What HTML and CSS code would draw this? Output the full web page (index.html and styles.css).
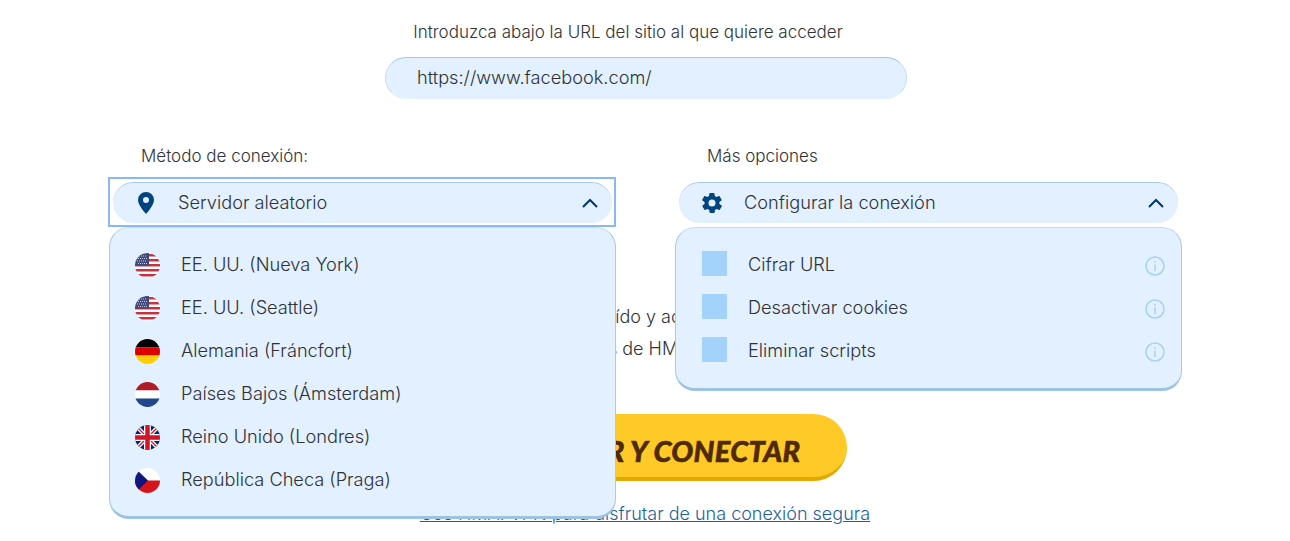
FILE: index.html
```html
<!DOCTYPE html>
<html lang="es">
<head>
  <meta charset="UTF-8">
  <title>Proxy web</title>
  <link rel="stylesheet" href="styles.css">
</head>
<body>
  <div class="page">
    <p class="url-label">Introduzca abajo la URL del sitio al que quiere acceder</p>
    <div class="url-input">https://www.facebook.com/</div>

    <div class="options">
      <div class="option-col">
        <p class="option-label">Método de conexión:</p>
        <div class="select-focus">
          <div class="select-pill">
            <svg class="select-icon" viewBox="0 0 24 24"><path fill="#00457f" fill-rule="evenodd" d="M12 1a8 8 0 0 0-8 8c0 5.5 8 14 8 14s8-8.500 8-14a8 8 0 0 0-8-8zm0 5a3 3 0 1 1 0 6 3 3 0 0 1 0-6z"/></svg>
            <span class="select-text">Servidor aleatorio</span>
            <svg class="chevron" viewBox="0 0 18 12"><path d="M2 10l7-7 7 7" fill="none" stroke="#00386b" stroke-width="2"/></svg>
          </div>
        </div>
        <ul class="menu">
          <li class="menu-item">
            <svg class="flag" viewBox="0 0 25 25"><defs><clipPath id="round"><circle cx="12.500" cy="12.500" r="12.500"/></clipPath></defs><g clip-path="url(#round)"><rect width="25" height="25" fill="#fff"/><path d="M0 1h25v2.500H0zM0 6h25v2.500H0zM0 11h25v2.500H0zM0 16h25v2.500H0zM0 21h25v2.500H0z" fill="#c8313e"/><rect width="14" height="12.500" fill="#3f4a7a"/><path d="M2 3h9M3 5.500h9M2 8h9M3 10.500h9" stroke="#c9cde0" stroke-width="1" stroke-dasharray="1 1"/></g></svg>
            <span>EE. UU. (Nueva York)</span>
          </li>
          <li class="menu-item">
            <svg class="flag" viewBox="0 0 25 25"><g clip-path="url(#round)"><rect width="25" height="25" fill="#fff"/><path d="M0 1h25v2.500H0zM0 6h25v2.500H0zM0 11h25v2.500H0zM0 16h25v2.500H0zM0 21h25v2.500H0z" fill="#c8313e"/><rect width="14" height="12.500" fill="#3f4a7a"/><path d="M2 3h9M3 5.500h9M2 8h9M3 10.500h9" stroke="#c9cde0" stroke-width="1" stroke-dasharray="1 1"/></g></svg>
            <span>EE. UU. (Seattle)</span>
          </li>
          <li class="menu-item">
            <svg class="flag" viewBox="0 0 25 25"><g clip-path="url(#round)"><rect width="25" height="8.500" fill="#000"/><rect y="8.500" width="25" height="8" fill="#dd0000"/><rect y="16.500" width="25" height="8.500" fill="#ffce00"/></g></svg>
            <span>Alemania (Fráncfort)</span>
          </li>
          <li class="menu-item">
            <svg class="flag" viewBox="0 0 25 25"><g clip-path="url(#round)"><rect width="25" height="8.500" fill="#ae1c28"/><rect y="8.500" width="25" height="8" fill="#fff"/><rect y="16.500" width="25" height="8.500" fill="#21468b"/></g></svg>
            <span>Países Bajos (Ámsterdam)</span>
          </li>
          <li class="menu-item">
            <svg class="flag" viewBox="0 0 25 25"><g clip-path="url(#round)"><rect width="25" height="25" fill="#00247d"/><path d="M0 0l25 25M25 0L0 25" stroke="#fff" stroke-width="4"/><path d="M0 0l25 25M25 0L0 25" stroke="#cf142b" stroke-width="1.300"/><path d="M12.500 0v25M0 12.500h25" stroke="#fff" stroke-width="7"/><path d="M12.500 0v25M0 12.500h25" stroke="#cf142b" stroke-width="4.500"/></g></svg>
            <span>Reino Unido (Londres)</span>
          </li>
          <li class="menu-item">
            <svg class="flag" viewBox="0 0 25 25"><g clip-path="url(#round)"><rect width="25" height="12.500" fill="#fff"/><rect y="12.500" width="25" height="12.500" fill="#d7141a"/><path d="M0 0l13 12.500L0 25z" fill="#11167f"/></g></svg>
            <span>República Checa (Praga)</span>
          </li>
        </ul>
      </div>

      <div class="option-col">
        <p class="option-label">Más opciones</p>
        <div class="select-plain">
          <div class="select-pill">
            <svg class="select-icon" viewBox="0 0 24 24"><path fill="#00457f" d="M19.400 13a7.600 7.600 0 0 0 0-2l2.100-1.600a.5.5 0 0 0 .1-.6l-2-3.500a.5.5 0 0 0-.6-.2l-2.500 1a7.300 7.300 0 0 0-1.700-1l-.4-2.700a.5.5 0 0 0-.5-.4h-4a.5.5 0 0 0-.5.4l-.4 2.700a7.300 7.300 0 0 0-1.700 1l-2.500-1a.5.5 0 0 0-.6.2l-2 3.500a.5.5 0 0 0 .1.600L4.600 11a7.600 7.600 0 0 0 0 2l-2.100 1.600a.5.5 0 0 0-.1.600l2 3.500c.1.200.4.300.6.200l2.500-1c.5.400 1.100.7 1.700 1l.4 2.700c0 .2.300.4.500.4h4c.2 0 .5-.2.500-.4l.4-2.700c.6-.3 1.200-.6 1.700-1l2.500 1c.2.100.5 0 .6-.2l2-3.500a.5.5 0 0 0-.1-.6zM12 15.500a3.500 3.500 0 1 1 0-7 3.500 3.500 0 0 1 0 7z"/></svg>
            <span class="select-text">Configurar la conexión</span>
            <svg class="chevron" viewBox="0 0 18 12"><path d="M2 10l7-7 7 7" fill="none" stroke="#00386b" stroke-width="2"/></svg>
          </div>
        </div>
        <ul class="menu menu-right">
          <li class="menu-item">
            <span class="check"></span><span class="check-text">Cifrar URL</span>
            <svg class="info" viewBox="0 0 20 20"><circle cx="10" cy="10" r="9" fill="none" stroke="#a3d2fb" stroke-width="1.500"/><path d="M10 8.500v6.500M10 5v1.800" stroke="#a3d2fb" stroke-width="1.500"/></svg>
          </li>
          <li class="menu-item">
            <span class="check"></span><span class="check-text">Desactivar cookies</span>
            <svg class="info" viewBox="0 0 20 20"><circle cx="10" cy="10" r="9" fill="none" stroke="#a3d2fb" stroke-width="1.500"/><path d="M10 8.500v6.500M10 5v1.800" stroke="#a3d2fb" stroke-width="1.500"/></svg>
          </li>
          <li class="menu-item">
            <span class="check"></span><span class="check-text">Eliminar scripts</span>
            <svg class="info" viewBox="0 0 20 20"><circle cx="10" cy="10" r="9" fill="none" stroke="#a3d2fb" stroke-width="1.500"/><path d="M10 8.500v6.500M10 5v1.800" stroke="#a3d2fb" stroke-width="1.500"/></svg>
          </li>
        </ul>
      </div>
    </div>

    <div class="consent">
      <p>He leído y acepto</p>
      <p>servicios de HMA! Proxy</p>
    </div>

    <button class="connect">ACEPTAR Y CONECTAR</button>
    <a class="vpn-link" href="#">Use HMA! VPN para disfrutar de una conexión segura</a>
  </div>
</body>
</html>
```

FILE: styles.css
```css
* {
  box-sizing: border-box;
}

body {
  margin: 0;
  background: #fff;
  color: #2f3338;
  font-family: Inter, "Open Sans", sans-serif;
  font-weight: 300;
  font-size: 17px;
  overflow: hidden;
}

p {
  margin: 0;
}

.page {
  display: flex;
  flex-direction: column;
  align-items: center;
  height: 541px;
  padding-top: 22px;
}

.url-label {
  line-height: 20px;
  padding-right: 34px;
}

.url-input {
  width: 522px;
  height: 42px;
  margin: 15px 0 0 2px;
  padding-left: 31px;
  line-height: 38px;
  font-size: 18.200px;
  background: #e3f0ff;
  border: 1px solid #c6dcf2;
  border-top-color: #a4c8e8;
  border-bottom-color: #e3f0ff;
  border-radius: 21px;
}

.options {
  display: flex;
  justify-content: space-between;
  width: 1074px;
  margin-top: 47px;
}

.option-col {
  position: relative;
  width: 508px;
}

.option-label {
  padding-left: 33px;
  line-height: 20px;
}

.select-focus {
  position: relative;
  z-index: 2;
  height: 50px;
  margin-top: 11px;
  padding: 3px 2px 3px 3px;
  border: 2px solid #8ab8f5;
}

.select-plain {
  height: 50px;
  margin-top: 11px;
  padding: 5px 4px 4px 5px;
}

.select-pill {
  display: flex;
  align-items: center;
  height: 41px;
  padding: 0 13px 0 21px;
  font-size: 18.200px;
  background: #e3f0ff;
  border-top: 1px solid #a4c8e8;
  border-radius: 21px;
}

.select-icon {
  width: 24px;
  height: 24px;
}

.select-text {
  flex: 1;
  margin-left: 20px;
  padding-bottom: 3px;
}

.chevron {
  width: 18px;
  height: 12px;
}

.menu {
  position: absolute;
  top: 81px;
  left: 1px;
  width: 507px;
  margin: 0;
  padding: 16px 0 14px;
  list-style: none;
  font-size: 18.200px;
  background: #e3f0ff;
  border: 1px solid #a9cbe6;
  border-top-color: #c3dcf3;
  border-bottom: 3px solid #9cc3e4;
  border-radius: 20px;
}

.menu-item {
  display: flex;
  align-items: center;
  height: 43px;
  padding-left: 25px;
}

.menu-item span {
  margin-left: 21px;
  padding-bottom: 4px;
}

.flag {
  width: 25px;
  height: 25px;
}

.menu-right {
  padding-bottom: 15px;
}

.menu-right .menu-item {
  padding: 0 16px 0 26px;
}

.menu-item .check {
  width: 25px;
  height: 25px;
  margin: -5px 0 0;
  padding: 0;
  background: #a3d2fb;
}

.menu-item .check-text {
  flex: 1;
}

.info {
  width: 20px;
  height: 20px;
}

.consent {
  display: flex;
  flex-direction: column;
  gap: 12px;
  align-items: center;
  margin-top: 80px;
  font-size: 18px;
  line-height: 20px;
}

.connect {
  width: 404px;
  height: 67px;
  margin-top: 55px;
  padding: 9px 0 0 13px;
  color: #4f2a00;
  font-family: Lato, sans-serif;
  font-size: 29px;
  font-weight: 900;
  font-style: italic;
  letter-spacing: 0.3px;
  -webkit-text-stroke: 0.6px #4f2a00;
  background: #ffca28;
  border: none;
  border-bottom: 4px solid #e0ab00;
  border-radius: 34px;
}

.vpn-link {
  margin-top: 23px;
  color: #1f5f9e;
  font-size: 18px;
  line-height: 20px;
}
```
